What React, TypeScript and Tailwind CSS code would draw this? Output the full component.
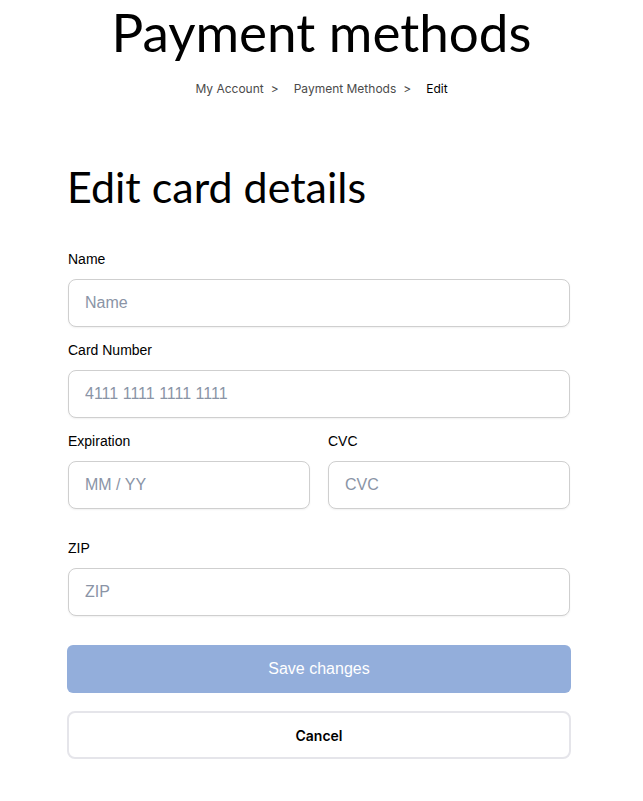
import React from "react";

const head = "font-['Lato',sans-serif]";

function Field({ label, placeholder }: { label: string; placeholder: string }) {
    return (
        <label className="flex flex-col gap-[10px]">
            <span className="text-[14px] leading-5 text-black">{label}</span>
            <input
                placeholder={placeholder}
                className="h-12 w-full rounded-lg border border-[#cfcfcf] bg-white px-4 text-[16px] text-black shadow-[0_1px_2px_rgba(0,0,0,0.06)] outline-none placeholder:text-[#8a94a6]"
            />
        </label>
    );
}

export default function App() {
    return (
        <div className="min-h-screen bg-white font-['Liberation_Sans',Arial,sans-serif]">
            <div className="flex flex-col items-center pt-[1px]">
                <h1 className={`${head} text-[53px] leading-[62px] text-black`}>Payment methods</h1>
                <nav className="mt-[18px] flex items-center font-['Inter',sans-serif] text-[12px] leading-4 text-[#4b4b4b]">
                    <span>My Account</span>
                    <span className="ml-[7px] mr-[15px]">&gt;</span>
                    <span>Payment Methods</span>
                    <span className="ml-[7px] mr-[15px]">&gt;</span>
                    <span className="text-black">Edit</span>
                </nav>
            </div>

            <div className="ml-[67px] mt-[64px] w-[504px]">
                <h2 className={`${head} text-[43px] leading-[52px] text-black`}>Edit card details</h2>

                <form className="mt-[36px] flex flex-col gap-[13px] px-px">
                    <Field label="Name" placeholder="Name" />
                    <Field label="Card Number" placeholder="4111 1111 1111 1111" />
                    <div className="grid grid-cols-2 gap-[18px]">
                        <Field label="Expiration" placeholder="MM / YY" />
                        <Field label="CVC" placeholder="CVC" />
                    </div>
                    <div className="mt-[16px]">
                        <Field label="ZIP" placeholder="ZIP" />
                    </div>
                </form>

                <div className="mt-[29px] flex flex-col gap-[18px]">
                    <button className="h-12 w-full rounded-md bg-[#93aedb] text-[16px] text-white">Save changes</button>
                    <button className="h-12 w-full rounded-lg border-2 border-[#e5e5ea] bg-white font-['Inter',sans-serif] text-[14px] font-semibold text-black">
                        Cancel
                    </button>
                </div>
            </div>
        </div>
    );
}
